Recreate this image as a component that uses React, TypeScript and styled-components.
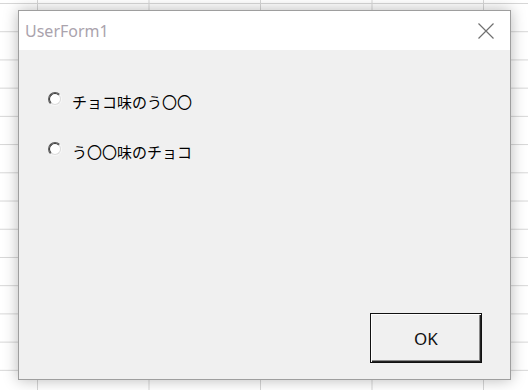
import styled, { createGlobalStyle } from 'styled-components';

const GlobalStyle = createGlobalStyle`
  html, body {
    margin: 0;
    padding: 0;
  }
  body {
    width: 528px;
    height: 390px;
    overflow: hidden;
    font-family: "Noto Sans", "Noto Sans CJK JP", sans-serif;
  }
`;

const options = ['チョコ味のう〇〇', 'う〇〇味のチョコ'];

export default function App() {
  return (
    <Sheet>
      <GlobalStyle />
      <Window>
        <TitleBar>
          <Title>UserForm1</Title>
          <CloseIcon viewBox="0 0 16 16">
            <path d="M0.5 0.5 L15.5 15.5 M15.5 0.5 L0.5 15.5" />
          </CloseIcon>
        </TitleBar>
        <FormBody>
          <OptionList>
            {options.map((label) => (
              <OptionRow key={label}>
                <RadioMark />
                <OptionLabel>{label}</OptionLabel>
              </OptionRow>
            ))}
          </OptionList>
          <ButtonRow>
            <OkButton>OK</OkButton>
          </ButtonRow>
        </FormBody>
      </Window>
    </Sheet>
  );
}

// spreadsheet behind the form
const Sheet = styled.div`
  box-sizing: border-box;
  width: 528px;
  height: 390px;
  padding: 10px 0 0 18px;
  background-color: #fff;
  background-image:
    linear-gradient(to right, #d6d6d6 1px, transparent 1px),
    linear-gradient(to bottom, #d6d6d6 1px, transparent 1px);
  background-size: 111.5px 28.23px;
  background-position: 37px 3px;
`;

const Window = styled.div`
  box-sizing: border-box;
  width: 493px;
  height: 370px;
  display: flex;
  flex-direction: column;
  border: 1px solid #9e9e9e;
  box-shadow: 0 0 14px rgba(0, 0, 0, 0.28);
`;

const TitleBar = styled.div`
  height: 39px;
  flex: none;
  display: flex;
  align-items: center;
  justify-content: space-between;
  padding: 0 16px 0 6px;
  background: #fff;
`;

const Title = styled.span`
  font-size: 16px;
  color: #aaa3ad;
  padding-top: 1px;
`;

const CloseIcon = styled.svg`
  width: 16px;
  height: 16px;
  fill: none;
  stroke: #707070;
  stroke-width: 1.2;
`;

const FormBody = styled.div`
  flex: 1;
  display: flex;
  flex-direction: column;
  justify-content: space-between;
  background: #f0f0f0;
  padding: 40px 29px 16px 29px;
`;

const OptionList = styled.div`
  display: flex;
  flex-direction: column;
  gap: 30px;
`;

const OptionRow = styled.label`
  display: flex;
  align-items: center;
  gap: 10px;
  height: 20px;
`;

const RadioMark = styled.span`
  position: relative;
  flex: none;
  box-sizing: border-box;
  width: 14px;
  height: 14px;
  border-radius: 50%;
  border: 1px solid;
  border-color: #5a5a5a #f8f8f8 #f8f8f8 #5a5a5a;
  margin-top: -2px;
  &::after {
    content: '';
    position: absolute;
    inset: 0;
    border-radius: 50%;
    border: 1px solid;
    border-color: #333 #dcdcdc #dcdcdc #333;
    background: #fff;
  }
`;

const OptionLabel = styled.span`
  font-family: "Noto Sans CJK JP", sans-serif;
  font-size: 15px;
  color: #000;
  line-height: 20px;
  padding-top: 3px;
`;

const ButtonRow = styled.div`
  display: flex;
  justify-content: flex-end;
`;

const OkButton = styled.button`
  box-sizing: border-box;
  width: 112px;
  height: 50px;
  margin-right: -1px;
  border: 1px solid #111;
  background: #f0f0f0;
  box-shadow:
    inset 1px 1px 0 #fff,
    inset -1px -1px 0 #222,
    inset -2px -2px 0 #8a8a8a;
  font-family: "Noto Sans", sans-serif;
  font-size: 17px;
  color: #111;
  padding: 0;
`;
